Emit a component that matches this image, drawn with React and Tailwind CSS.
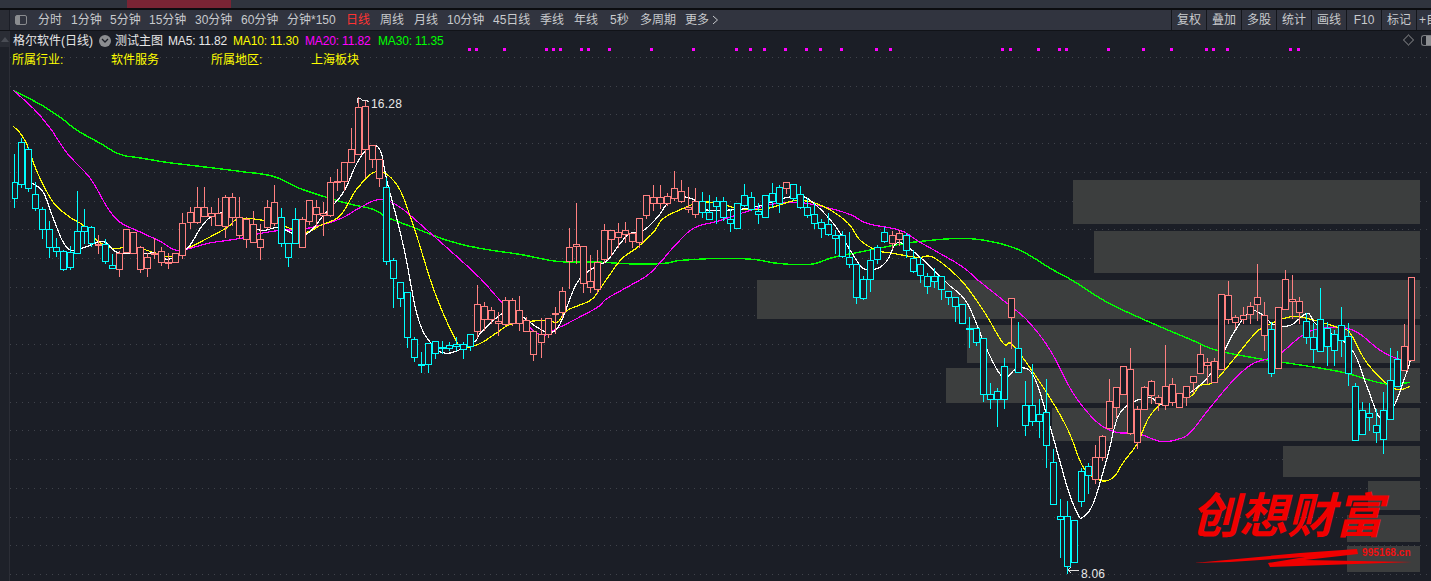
import React from "react";

const P = "#ff8080";
const C = "#00ffff";
const BG = "#1b1e26";

// [bodyTop, bodyBottom, high, low]
const K = [
[182,198,154,207],[142,184,138,187],[149,188,147,191],[194,208,182,210],[209,229,207,238],[229,247,221,257],[247,251,238,256],[251,269,250,270],[252,267,246,269],[231,253,191,253],
[226,231,209,243],[227,243,226,246],[244,244,235,253],[244,261,239,263],[265,268,254,268],[253,269,251,276],[229,252,229,252],[232,253,232,253],[247,269,246,272],[257,268,253,276],
[253,253,238,258],[251,262,247,265],[262,262,253,268],[253,262,253,262],[223,255,213,258],[212,222,207,228],[207,222,187,223],[207,216,187,216],[213,216,207,225],[213,225,198,225],
[197,226,195,237],[197,217,193,225],[217,235,197,238],[219,239,217,247],[224,242,211,242],[239,247,224,259],[207,227,200,228],[202,223,185,225],[217,243,208,246],[243,257,243,266],
[219,243,208,243],[219,247,217,247],[200,221,200,224],[207,214,200,225],[213,215,202,235],[182,215,177,216],[181,182,169,190],[162,181,162,190],[149,162,128,162],[107,154,97,154],
[106,149,100,177],[145,159,145,167],[159,178,159,186],[187,261,178,264],[260,278,258,307],[282,298,282,306],[292,337,292,347],[339,357,337,361],[364,364,352,372],[343,364,343,372],
[341,353,341,358],[347,347,341,353],[345,348,342,350],[344,346,337,350],[344,349,342,358],[334,346,334,350],[304,331,285,337],[306,319,302,330],[310,319,307,323],[321,323,312,335],
[300,324,297,325],[300,323,298,325],[310,323,296,330],[320,331,317,331],[331,354,330,360],[334,342,318,357],[318,334,318,337],[313,313,307,333],[291,312,287,317],[247,261,228,288],
[244,246,203,263],[246,283,246,292],[281,287,255,292],[262,289,250,293],[230,259,224,262],[230,239,230,255],[232,237,223,247],[230,234,222,242],[233,241,233,247],[218,242,218,247],
[195,215,195,218],[197,203,185,210],[197,203,185,208],[196,203,193,205],[188,198,171,200],[191,201,180,202],[207,209,187,212],[201,214,188,217],[201,212,192,217],[212,219,195,219],
[201,206,197,223],[201,217,197,220],[219,223,209,231],[203,228,203,228],[195,205,184,206],[197,209,192,210],[211,214,203,223],[195,217,195,217],[193,201,183,207],[187,203,185,212],
[182,188,182,193],[184,198,184,200],[194,207,186,208],[207,215,198,217],[214,223,203,228],[222,228,219,237],[224,234,213,235],[235,238,230,253],[235,256,231,257],[257,264,232,267],
[264,297,264,303],[279,298,276,299],[260,279,249,291],[247,259,245,263],[232,241,227,242],[235,243,231,248],[233,239,230,245],[235,250,233,257],[258,271,250,272],[264,275,257,282],
[276,286,273,293],[276,281,268,287],[276,289,276,299],[291,297,291,304],[297,306,297,321],[304,323,304,323],[328,328,317,347],[328,342,328,345],[338,394,338,401],[394,399,383,408],
[391,399,388,426],[366,399,358,408],[298,317,298,348],[348,372,322,372],[405,425,381,435],[405,421,364,425],[414,421,399,437],[412,445,379,467],[462,504,449,504],[516,519,499,557],
[516,566,501,573],[520,562,520,562],[471,501,468,506],[466,475,463,493],[457,479,445,483],[436,457,435,460],[401,428,379,428],[387,407,387,417],[366,394,366,394],[369,433,348,434],
[409,442,406,448],[387,409,386,409],[381,395,380,403],[397,403,395,410],[386,405,345,409],[384,402,378,405],[393,407,393,407],[386,397,386,405],[376,382,376,392],[354,373,345,373],
[362,365,358,383],[361,382,358,382],[294,369,294,369],[295,319,281,323],[317,322,315,328],[315,319,307,323],[306,314,302,323],[297,304,264,320],[315,335,302,350],[329,373,322,376],
[307,368,307,368],[279,309,270,309],[299,301,275,318],[301,312,297,323],[321,337,313,343],[337,349,323,362],[319,351,288,351],[328,346,322,365],[334,350,330,365],[325,340,307,356],
[336,373,323,385],[386,440,383,440],[410,434,402,434],[413,417,403,430],[425,432,409,442],[410,439,392,453],[380,419,348,419],[359,386,351,386],[346,370,324,370],[277,360,277,360],
];

const cyanRanges = [[0,11],[13,14],[38,40],[53,65],[98,109],[111,124],[127,141],[143,153],[179,179],[184,197]];
const isCyan = (i) => cyanRanges.some(([a, b]) => i >= a && i <= b);

const MA30 = [[13,90],[40,104],[60,117],[77,130],[100,143],[120,154],[143,158],[167,162],[200,166],[240,171],[273,176],[297,187],[320,195],[347,203],[373,209],[387,217],[413,227],[447,240],[480,248],[520,254],[557,261],[597,261.6],[620,263],[645,263.7],[667,262.6],[680,260],[720,258],[753,259],[778,263],[810,264],[833,257],[863,251],[893,245],[920,241],[960,238],[990,241],[1020,250],[1050,268],[1072,280],[1107,302],[1150,322],[1190,339],[1217,350],[1263,359],[1303,365],[1343,372],[1370,380],[1390,384],[1410,382]];
const MA20 = [[13,90],[33,108],[50,128],[67,153],[90,178],[107,207],[120,222],[143,233],[160,241],[177,250],[200,245],[213,242],[240,238],[260,233],[280,230],[300,229],[320,225],[343,217],[360,207],[380,199],[400,207],[427,230],[453,253],[480,278],[497,297],[513,313],[533,330],[543,335],[553,330],[573,320],[597,307],[607,298],[630,285],[647,275],[660,262],[673,247],[693,228],[720,220],[753,209],[777,203],[807,203],[847,213],[867,223],[900,230],[920,242],[960,265],[978,280],[1003,300],[1027,320],[1050,350],[1073,393],[1097,422],[1117,432],[1137,433],[1160,441],[1177,439],[1190,432],[1210,407],[1233,380],[1253,363],[1277,355],[1307,332],[1337,327],[1357,332],[1380,350],[1400,359],[1411,356]];
const MA10 = [[13,126],[20,133],[27,145],[37,172],[53,202],[70,217],[83,225],[97,240],[113,248],[133,246],[153,252],[170,256],[187,248],[207,238],[227,227],[240,218],[273,222],[303,232],[320,225],[340,215],[357,188],[377,171],[397,185],[413,225],[433,288],[453,335],[463,347],[480,343],[497,332],[513,323],[547,320],[557,322],[567,310],[590,300],[600,288],[620,260],[637,247],[653,232],[663,218],[683,208],[700,202],[720,203],[740,209],[767,208],[797,200],[823,206],[847,222],[860,240],[877,250],[893,253],[917,257],[933,257],[960,279],[983,310],[1003,343],[1013,345],[1043,387],[1067,428],[1083,467],[1100,480],[1113,477],[1123,462],[1137,443],[1150,415],[1170,397],[1190,396],[1200,385],[1213,382],[1230,363],[1253,335],[1263,327],[1287,317],[1307,318],[1340,328],[1350,333],[1367,363],[1393,388],[1410,386]];
const MA5 = [[32,183],[43,192],[53,218],[63,242],[72,250],[87,246],[103,241],[117,252],[140,253],[157,253],[168,259],[187,248],[200,228],[210,217],[225,212],[240,219],[260,230],[277,227],[290,232],[300,237],[313,228],[323,215],[343,192],[357,162],[370,146],[380,150],[387,182],[403,245],[417,315],[430,342],[447,353],[473,342],[480,333],[493,320],[507,311],[520,315],[537,327],[550,332],[560,323],[577,282],[597,265],[607,260],[627,235],[643,230],[657,217],[673,197],[693,199],[700,208],[720,210],[753,207],[787,197],[807,198],[833,223],[850,250],[863,268],[877,268],[887,260],[898,242],[920,257],[947,283],[967,303],[987,350],[1003,377],[1017,368],[1033,375],[1050,427],[1067,487],[1077,513],[1082,517],[1093,503],[1107,457],[1120,412],[1147,397],[1163,404],[1190,392],[1213,370],[1233,333],[1250,311],[1263,315],[1273,324],[1290,325],[1307,313],[1317,325],[1350,347],[1367,387],[1380,418],[1393,407],[1407,370],[1411,356]];

const ZONES = [[1073,180,347,44],[1094,231,326,42],[757,280,663,39],[967,325,453,38],[946,368,474,35],[1052,408,368,33],[1283,446,137,31],[1368,481,52,29],[1347,515,73,27],[1347,546,73,26]];

const DOTS = [469,476,504,546,553,560,581,588,609,651,693,736,750,764,785,806,820,841,876,890,1002,1010,1038,1059,1066,1108,1143,1171,1206,1213,1227,1290,1298];

const smooth = (pts) => {
  const out = [];
  for (let i = 0; i < pts.length - 1; i++) {
    const p0 = pts[Math.max(i - 1, 0)], p1 = pts[i], p2 = pts[i + 1], p3 = pts[Math.min(i + 2, pts.length - 1)];
    for (let s = 0; s < 6; s++) {
      const t = s / 6, t2 = t * t, t3 = t2 * t;
      const f = (a, b, c, d) => 0.5 * (2 * b + (c - a) * t + (2 * a - 5 * b + 4 * c - d) * t2 + (3 * b - a - 3 * c + d) * t3);
      out.push(`${f(p0[0], p1[0], p2[0], p3[0]).toFixed(1)},${f(p0[1], p1[1], p2[1], p3[1]).toFixed(1)}`);
    }
  }
  out.push(pts[pts.length - 1].join(","));
  return out.join(" ");
};

const Candle = ({ d, i }) => {
  const col = isCyan(i) ? C : P;
  const cx = Math.round(14 + 7.02 * i);
  const [t, b, h, l] = d;
  const clipL = i === 0 ? 1 : 0;
  return (
    <g>
      <rect x={cx} y={Math.min(h, t)} width="1" height={Math.max(l, b) - Math.min(h, t) + 1} fill={col} />
      {b - t < 1 ? (
        <rect x={cx - 3} y={t} width="7" height="2" fill={col} />
      ) : (
        <rect x={cx - 2.5 + clipL} y={t + 0.5} width={6 - clipL} height={b - t} fill={BG} stroke={col} strokeWidth="1" />
      )}
    </g>
  );
};

const tabs = [
  ["分时", "w-[33px]"], ["1分钟", "w-[39px]"], ["5分钟", "w-[39px]"], ["15分钟", "w-[46px]"], ["30分钟", "w-[46px]"], ["60分钟", "w-[46px]"], ["分钟*150", "w-[59px]"],
  ["日线", "w-[34px] text-[#ff3333]"], ["周线", "w-[34px]"], ["月线", "w-[33px]"], ["10分钟", "w-[46px]"], ["45日线", "w-[47px]"], ["季线", "w-[34px]"], ["年线", "w-[36px]"], ["5秒", "w-[30px]"], ["多周期", "w-[45px]"], ["更多", "w-[27px]"],
];
const tools = ["复权", "叠加", "多股", "统计", "画线", "F10", "标记"];

export default function App() {
  return (
    <div className="w-[1431px] h-[581px] overflow-hidden flex flex-col bg-[#1b1e26] text-[12px] leading-none font-['Liberation_Sans','Noto_Sans_CJK_SC',sans-serif]">
      <div className="h-[8px] flex shrink-0 bg-[#30343e]">
        <div className="w-[127px]" />
        <div className="w-[104px] bg-[#7a2434]" />
      </div>
      <div className="h-[2px] shrink-0 bg-[#0c0d10]" />
      <div className="h-[21px] shrink-0 flex bg-[#31343f] border-b border-[#111318] text-[#c8cacd] whitespace-nowrap">
        <div className="w-[10px] bg-[#2a2d35] border-r border-[#1b1e26]" />
        <div className="w-[12px] h-[10px] ml-[5px] mt-[5px] rounded-[2px] border border-[#8a8c90] flex">
          <div className="w-[4px] bg-[#8a8c90]" />
        </div>
        <div className="flex flex-1 items-center pl-[11px] overflow-hidden">
          {tabs.map(([t, c]) => (
            <span key={t} className={c}>{t}</span>
          ))}
          <svg width="7" height="10" viewBox="0 0 7 10"><path d="M1 1l4.500 4L1 9" fill="none" stroke="#c8cacd" /></svg>
        </div>
        <div className="flex gap-px bg-[#14161b] pl-px">
          {tools.map((t) => (
            <div key={t} className="w-[34px] bg-[#31343f] flex items-center justify-center">{t}</div>
          ))}
          <div className="w-[14px] bg-[#31343f] flex items-center pl-[2px] overflow-hidden">+自</div>
        </div>
      </div>
      <div className="relative flex-1 flex">
        <div className="w-[10px] shrink-0 bg-[#1e2129] border-r border-[#2c2e36]">
          <div className="h-[16px] bg-[#2a2d35] flex items-center justify-center">
            <svg width="8" height="5" viewBox="0 0 8 5"><path d="M4 0l4 5H0z" fill="#4a4d55" /></svg>
          </div>
        </div>
        <div className="relative flex-1">
          <svg className="absolute inset-0" width="1421" height="550" viewBox="10 31 1421 550" shapeRendering="crispEdges">
            {Array.from({ length: 19 }, (_, k) => (
              <line key={k} x1="10" x2="1431" y1={Math.round(57 + 28.72 * k) + 0.5} y2={Math.round(57 + 28.72 * k) + 0.5} stroke="#40434b" strokeDasharray="1 5" />
            ))}
            {ZONES.map(([x, y, w, h]) => <rect key={x + "-" + y} x={x} y={y} width={w} height={h} fill="#3c3e3e" />)}
            {DOTS.map((x) => <rect key={x} x={x - 1} y="48" width="3" height="3" fill="#ff00ff" />)}
            <g transform="translate(0.3 0.4)">
              <polyline points={smooth(MA30)} fill="none" stroke="#00ff00" strokeWidth="1.4" />
              <polyline points={smooth(MA20)} fill="none" stroke="#ff00ff" strokeWidth="1.2" />
              <polyline points={smooth(MA10)} fill="none" stroke="#ffff00" strokeWidth="1.2" />
              <polyline points={smooth(MA5)} fill="none" stroke="#ffffff" strokeWidth="1.2" />
            </g>
            {K.map((d, i) => <Candle key={i} d={d} i={i} />)}
            <path d="M357 103V98h3l2 2 4 0 3 2" fill="none" stroke="#e0e0e0" />
            <path d="M1079 570h-11M1071 567l-3 3 3 3" fill="none" stroke="#e0e0e0" />
            <path d="M1403.500 40l5-5 5 5-5 5z" fill="none" stroke="#55575c" />
          </svg>

          <div className="relative flex flex-col">
            <div className="h-[17px] mt-px flex items-center pl-[3px] whitespace-nowrap">
              <span className="w-[84px] text-[#e6e6e6]">格尔软件(日线)</span>
              <span className="w-[12px] h-[12px] mr-[4px] ml-[2px] rounded-full bg-[#8b8d90] flex items-center justify-center">
                <svg width="8" height="6" viewBox="0 0 8 6"><path d="M1 1l3 3 3-3" fill="none" stroke="#1b1e26" strokeWidth="1.300" /></svg>
              </span>
              <span className="w-[53px] text-[#e6e6e6]">测试主图</span>
              <span className="w-[65px] tracking-[-0.15px] text-[#e8e8e8]">MA5: 11.82</span>
              <span className="w-[72px] tracking-[-0.15px] text-[#ffff00]">MA10: 11.30</span>
              <span className="w-[73px] tracking-[-0.15px] text-[#ff00ff]">MA20: 11.82</span>
              <span className="tracking-[-0.15px] text-[#00ff00]">MA30: 11.35</span>
            </div>
            <div className="h-[17px] mt-[2px] flex items-center pl-[2px] text-[#ffff00] whitespace-nowrap">
              <span className="w-[99px]">所属行业:</span>
              <span className="w-[100px]">软件服务</span>
              <span className="w-[100px]">所属地区:</span>
              <span>上海板块</span>
            </div>
          </div>

          <div className="absolute right-0 top-[4px] w-[10px] h-[11px] rounded-l-[3px] border border-r-0 border-[#77797d] flex justify-end">
            <div className="w-[5px] bg-[#8b8d90]" />
          </div>
          <span className="absolute left-[361px] top-[67px] tracking-[0.2px] text-[#e8e8e8]">16.28</span>
          <span className="absolute left-[1071px] top-[537px] tracking-[0.2px] text-[#e8e8e8]">8.06</span>

          <div className="absolute left-[1181px] top-[453px] w-[205px] text-[48px] leading-[56px] font-bold italic text-[#f00000] whitespace-nowrap font-['Noto_Sans_CJK_SC',sans-serif]">
            <span>创想财富</span>
          </div>
          <svg className="absolute left-[1184px] top-[516px]" width="230" height="24" viewBox="1194 547 230 24">
            <path d="M1194 563L1300 553L1357 549L1358 554L1305 560L1412 562L1270 567L1268 563L1305 557L1230 562Z" fill="#f00000" />
          </svg>
          <span className="absolute left-[1352px] top-[517px] text-[10px] font-bold text-[#f01010] tracking-[0.1px]">995168.cn</span>
        </div>
      </div>
    </div>
  );
}
